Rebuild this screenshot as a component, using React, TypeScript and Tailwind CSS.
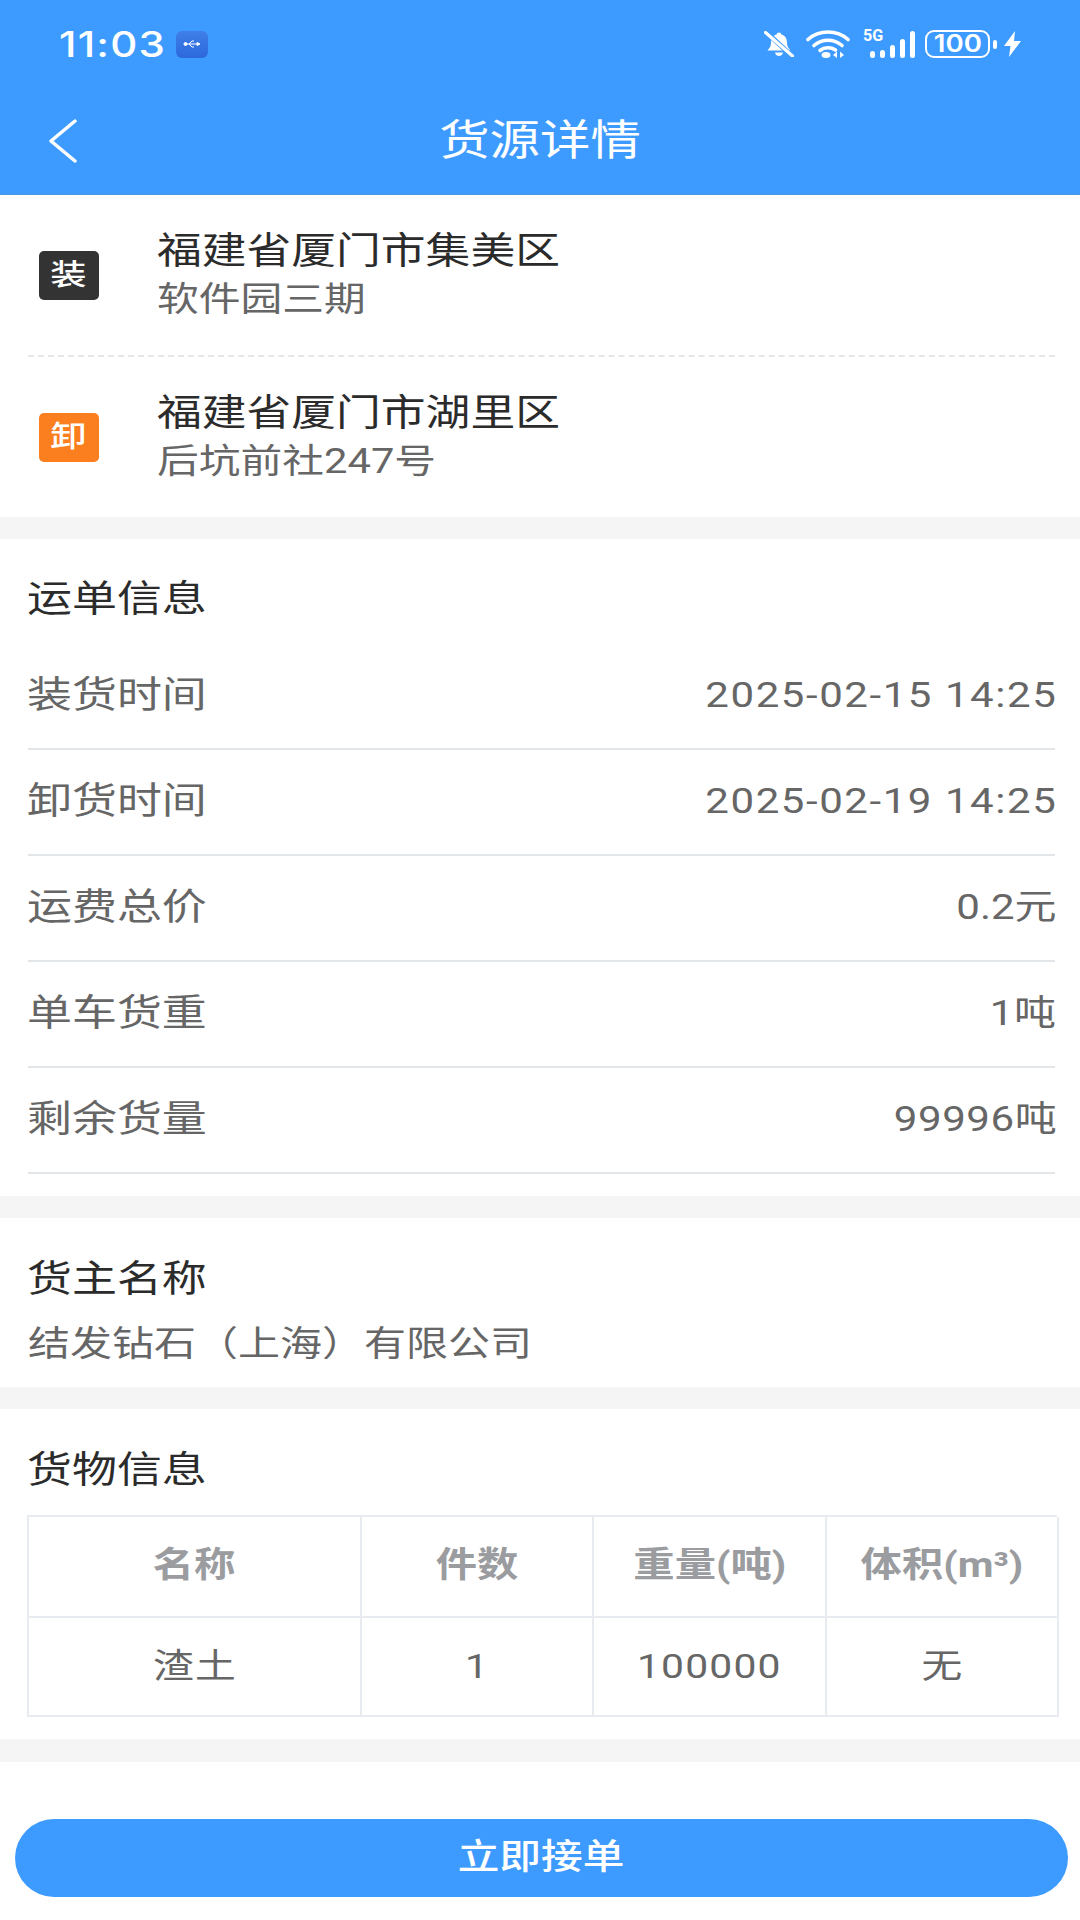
const infoRows = [
  { label: "装货时间", value: "2025-02-15 14:25", track: "tracking-[1.3px]" },
  { label: "卸货时间", value: "2025-02-19 14:25", track: "tracking-[1.3px]" },
  { label: "运费总价", value: "0.2元", track: "tracking-[0px]" },
  { label: "单车货重", value: "1吨", track: "tracking-[0.5px]" },
  { label: "剩余货量", value: "99996吨", track: "tracking-[0.5px]" },
];

const cargoHead = ["名称", "件数", "重量(吨)", "体积(m³)"];
const cargoRow = ["渣土", "1", "100000", "无"];

function BellOff() {
  return (
    <svg width="30" height="26" viewBox="0 0 30 26" className="mr-[12px]">
      <path d="M15 1.500c-1.300 0-2.200.8-2.400 2C8.500 4.500 7 8 7 11.500c0 3-1 5.500-3.500 8h23c-2.500-2.500-3.500-5-3.500-8 0-3.500-1.500-7-5.600-8-.2-1.200-1.100-2-2.400-2z" fill="white" />
      <path d="M11 21.500h8c-.4 2-2 3.500-4 3.500s-3.600-1.500-4-3.500z" fill="white" />
      <path d="M2 1l26 24" stroke="#3d9bff" strokeWidth="5" />
      <path d="M1.500 1.500l27 23.500" stroke="white" strokeWidth="3.200" strokeLinecap="round" />
    </svg>
  );
}

function Wifi() {
  return (
    <svg width="44" height="28" viewBox="0 0 44 28" fill="none" stroke="white" strokeWidth="3.600" strokeLinecap="round" className="mr-[13px]">
      <path d="M2 9.500C13-.5 31-.5 42 9.500" />
      <path d="M8 15.500c8-7 20-7 28 0" />
      <path d="M14 20.500c4.500-3.500 11-3.500 15.500-.5" />
      <ellipse cx="20" cy="25" rx="4.500" ry="3" fill="white" stroke="none" />
      <path d="M31 21.500l-4 3.500 4 3zM34 21.500l4 3.500-4 3z" fill="white" stroke="none" />
    </svg>
  );
}

function Signal() {
  return (
    <div className="flex flex-col items-start w-[49px] h-[28px] mr-[13px] relative">
      <span className="absolute left-0 top-[-4px] text-[17px] leading-[18px] font-bold origin-left scale-x-[0.95]">5G</span>
      <div className="mt-auto ml-[7px] flex items-end gap-[5px]">
        <div className="w-[5px] h-[7px] rounded-full bg-white" />
        <div className="w-[5px] h-[8px] rounded-full bg-white" />
        <div className="w-[5px] h-[13px] rounded-full bg-white" />
        <div className="w-[5px] h-[19px] rounded-full bg-white" />
        <div className="w-[5px] h-[27px] rounded-full bg-white" />
      </div>
    </div>
  );
}

function Battery() {
  return (
    <div className="flex items-center mr-[7px]">
      <div className="w-[65px] h-[28px] rounded-[9px] border-[2.500px] border-white flex items-center justify-center">
        <span className="text-[24px] leading-none font-semibold font-['Inter',sans-serif] inline-block scale-x-[1.15]">100</span>
      </div>
      <div className="ml-[3px] w-[4px] h-[9px] bg-white rounded-[2px]" />
    </div>
  );
}

function StatusBar() {
  return (
    <div className="h-[88px] flex items-center justify-between pl-[59px] pr-[59px] text-white">
      <div className="flex items-center">
        <span className="w-[117px] text-[35px] leading-none tracking-[1px] font-medium font-['Inter',sans-serif] inline-block origin-left scale-x-[1.2]">11:03</span>
        <div className="w-[32px] h-[27px] rounded-[6px] bg-gradient-to-b from-[#3f7fe8] to-[#2c68dc] flex items-center justify-center">
          <svg width="18" height="10" viewBox="0 0 18 10" fill="white" stroke="white" strokeWidth="1">
            <path d="M3 5h13M6 5l3-3h2M6 5l3 3h2" fill="none" />
            <circle cx="2.500" cy="5" r="1.500" />
            <path d="M14 3.500l3 1.500-3 1.500z" />
          </svg>
        </div>
      </div>
      <div className="flex items-center">
        <BellOff />
        <Wifi />
        <Signal />
        <Battery />
        <svg width="17" height="26" viewBox="0 0 17 26" fill="white">
          <path d="M11 0L0 15h6.500L5 26l12-16h-7z" />
        </svg>
      </div>
    </div>
  );
}

function AddressRow({ tag, tagClass, title, sub, h }: { tag: string; tagClass: string; title: string; sub: string; h: string }) {
  return (
    <div className={`flex items-center pl-[39px] ${h}`}>
      <div className={`w-[60px] h-[49px] rounded-[5px] flex items-center justify-center text-white ${tagClass}`}>
        <span className="text-[29px] leading-none font-medium inline-block scale-x-[1.25]">{tag}</span>
      </div>
      <div className="ml-[58px] mt-[-4px]">
        <div className="text-[37px] leading-[52px] text-[#2b2b2b] origin-left scale-x-[1.21] translate-y-[2px] whitespace-nowrap">{title}</div>
        <div className="text-[34.500px] leading-[46px] text-[#666] origin-left scale-x-[1.21] whitespace-nowrap">{sub}</div>
      </div>
    </div>
  );
}

export default function App() {
  return (
    <div className="w-[1080px] h-[1920px] bg-white flex flex-col overflow-hidden font-['Roboto','Noto_Sans_CJK_SC',sans-serif]">
      <div className="bg-[#3d9bff] h-[195px] border-b border-[#4a94e6]">
        <StatusBar />
        <div className="grid grid-cols-[1fr_auto_1fr] items-center h-[106px]">
          <div className="pl-[48px] flex items-center">
            <svg width="30" height="44" viewBox="0 0 30 44" fill="none" stroke="white" strokeWidth="3.500" strokeLinecap="round" strokeLinejoin="round">
              <path d="M27 2L3 22l24 20" />
            </svg>
          </div>
          <span className="text-[42px] leading-none text-white inline-block scale-x-[1.2]">货源详情</span>
          <div />
        </div>
      </div>

      <div>
        <AddressRow h="h-[160px]" tag="装" tagClass="bg-[#333333]" title="福建省厦门市集美区" sub="软件园三期" />
        <div className="ml-[28px] mr-[25px] border-t-2 border-dashed border-[#e6e6e6]" />
        <AddressRow h="h-[160px]" tag="卸" tagClass="bg-[#fb7e1f]" title="福建省厦门市湖里区" sub="后坑前社247号" />
      </div>
      <div className="h-[22px] bg-[#f5f5f5]" />

      <div className="pl-[28px] pr-[25px]">
        <div className="mt-[31px] mb-[14px] h-[60px] flex items-center text-[37px] text-[#2b2b2b]">
          <span className="inline-block -ml-[1px] origin-left scale-x-[1.215]">运单信息</span>
        </div>
        {infoRows.map((row) => (
          <div key={row.label} className="h-[106px] flex items-center justify-between border-b-2 border-[#e3e6e8]">
            <span className="text-[37px] text-[#666] inline-block -ml-[1px] origin-left scale-x-[1.215]">{row.label}</span>
            <span className={`text-[35px] text-[#666] inline-block -mr-[2px] origin-right scale-x-[1.2] ${row.track}`}>{row.value}</span>
          </div>
        ))}
      </div>
      <div className="h-[22px] mt-[22px] bg-[#f5f5f5]" />

      <div className="px-[28px] h-[169px] pt-[32px]">
        <div className="-ml-[1px] text-[37px] leading-[60px] text-[#2b2b2b] origin-left scale-x-[1.215]">货主名称</div>
        <div className="text-[35px] leading-[70px] text-[#666] origin-left scale-x-[1.2]">结发钻石（上海）有限公司</div>
      </div>
      <div className="h-[22px] bg-[#f5f5f5]" />

      <div className="pl-[27px] pt-[32px]">
        <div className="text-[37px] leading-[60px] text-[#2b2b2b] mb-[14px] origin-left scale-x-[1.215]">货物信息</div>
        <div className="grid grid-cols-[333px_232px_233px_232px] w-[1030px] border-t-2 border-l-2 border-[#e8ebef]">
          {cargoHead.map((h) => (
            <div key={h} className="h-[101px] flex items-center justify-center border-r-2 border-b-2 border-[#e8ebef]">
              <span className="text-[35px] font-bold text-[#9a9ca0] inline-block scale-x-[1.18]">{h}</span>
            </div>
          ))}
          {cargoRow.map((c) => (
            <div key={c} className="h-[99px] flex items-center justify-center border-r-2 border-b-2 border-[#e8ebef]">
              <span className="text-[34px] text-[#666] tracking-[1px] inline-block scale-x-[1.2]">{c}</span>
            </div>
          ))}
        </div>
      </div>
      <div className="h-[23px] mt-[22px] bg-[#f5f5f5]" />

      <div className="pl-[15px] pr-[12px] pt-[57px]">
        <button className="w-full h-[78px] rounded-[39px] bg-[#3d9bff] text-white">
          <span className="text-[35px] font-medium inline-block scale-x-[1.19]">立即接单</span>
        </button>
      </div>
    </div>
  );
}
